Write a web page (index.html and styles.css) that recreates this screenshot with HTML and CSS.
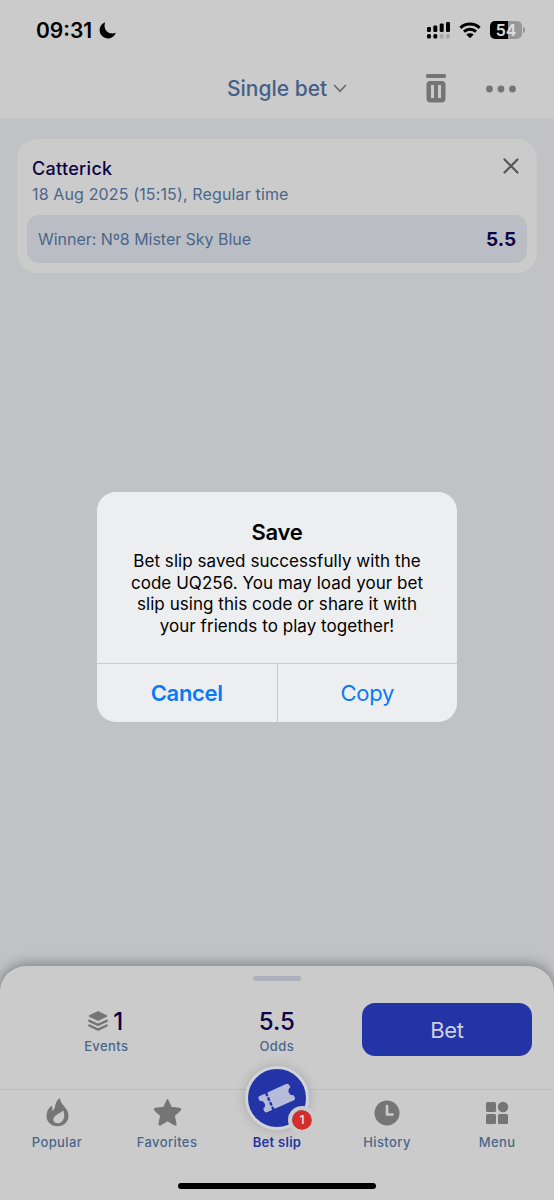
FILE: index.html
```html
<!DOCTYPE html>
<html lang="en">
<head>
  <meta charset="UTF-8">
  <meta name="viewport" content="width=device-width, initial-scale=1">
  <title>Bet slip</title>
  <link rel="stylesheet" href="styles.css">
</head>
<body>
  <header class="header">
    <div class="status">
      <span class="time">09:31</span>
      <svg class="moon" width="17" height="17" viewBox="0 0 17 17"><path d="M6.200.3A8.300 8.300 0 1 0 16.800 10.800C10 13.500 3.500 8 6.200.3z"/></svg>
      <div class="status-icons">
        <svg width="24" height="18" viewBox="0 0 24 18">
          <g fill="#000">
            <rect x="0" y="6" width="4" height="5" rx="1.200"/><rect x="6.300" y="4.500" width="4" height="6.500" rx="1.200"/>
            <rect x="12.700" y="2.500" width="4" height="8.500" rx="1.200"/><rect x="19" y="1" width="4" height="10" rx="1.200"/>
            <rect x="0" y="13" width="4" height="4.500" rx="1.500"/><rect x="6.300" y="13" width="4" height="4.500" rx="1.500"/>
          </g>
          <g fill="#a9a9a9"><rect x="12.700" y="13" width="4" height="4.500" rx="1.500"/><rect x="19" y="13" width="4" height="4.500" rx="1.500"/></g>
        </svg>
        <svg class="wifi" width="22" height="17" viewBox="0 0 22 17">
          <path d="M1.400 5.800a14 14 0 0 1 19.200 0M5 9.600a8.800 8.800 0 0 1 12 0" fill="none" stroke="#000" stroke-width="3"/>
          <path d="M7.300 12.600a5.500 5.500 0 0 1 7.400 0L11 16.300z"/>
        </svg>
        <div class="battery"><span>54</span></div>
      </div>
    </div>
    <div class="toolbar">
      <div class="bet-type">Single bet
        <svg width="14" height="9" viewBox="0 0 14 9"><path d="M1.500 1.500 7 7.200l5.500-5.700" fill="none" stroke="#6e6e6e" stroke-width="1.700" stroke-linecap="round"/></svg>
      </div>
      <svg class="trash" width="20" height="29" viewBox="0 0 20 29" fill="#757575">
        <rect x="0" y="0" width="20" height="4" rx="1.500"/>
        <path fill-rule="evenodd" d="M4 7h12a3.500 3.500 0 0 1 3.500 3.500v14A4 4 0 0 1 15.500 28.500h-11a4 4 0 0 1-4-4v-14A3.500 3.500 0 0 1 4 7zM5 11v13h3V11zM12 11v13h3V11z"/>
      </svg>
      <svg class="dots" width="30" height="8" viewBox="0 0 30 8" fill="#757575"><circle cx="3.500" cy="4" r="3.400"/><circle cx="15" cy="4" r="3.400"/><circle cx="26.500" cy="4" r="3.400"/></svg>
    </div>
  </header>

  <main class="content">
    <section class="card">
      <div class="card-head">
        <h2>Catterick</h2>
        <svg width="16" height="16" viewBox="0 0 16 16"><path d="M1.500 1.500l13 13M14.500 1.500l-13 13" stroke="#555" stroke-width="2.200" stroke-linecap="round"/></svg>
      </div>
      <p class="date">18 Aug 2025 (15:15), Regular time</p>
      <div class="pick">
        <span>Winner: Nº8 Mister Sky Blue</span>
        <strong>5.5</strong>
      </div>
    </section>
  </main>

  <div class="dialog">
    <div class="dialog-body">
      <h1>Save</h1>
      <p>Bet slip saved successfully with the<br>code UQ256. You may load your bet<br>slip using this code or share it with<br>your friends to play together!</p>
    </div>
    <div class="dialog-actions">
      <button class="cancel">Cancel</button>
      <button class="copy">Copy</button>
    </div>
  </div>

  <footer class="sheet">
    <div class="grip"></div>
    <div class="summary">
      <div class="stat">
        <div class="value">
          <svg width="20" height="21" viewBox="0 0 20 21">
            <path d="M10 .8 18.500 5 10 9.200 1.500 5z" fill="#757575" stroke="#757575" stroke-width="1.500" stroke-linejoin="round"/>
            <path d="M1.300 9.800 10 13.900l8.700-4.100M1.300 14.500 10 18.600l8.700-4.100" fill="none" stroke="#757575" stroke-width="2.400" stroke-linecap="round" stroke-linejoin="round"/>
          </svg>1
        </div>
        <div class="label">Events</div>
      </div>
      <div class="stat">
        <div class="value">5.5</div>
        <div class="label">Odds</div>
      </div>
      <button class="bet">Bet</button>
    </div>
    <nav class="tabs">
      <a class="tab">
        <div class="icon"><svg width="23" height="29" viewBox="0 0 24 30"><path fill-rule="evenodd" d="M13.500.6c.6-.5 1.200-.3 1.300.5.700 6.300 8.700 9.200 8.700 17.300 0 6.500-5 11-11.600 11C5.300 29.400.5 24.800.5 18.400c0-4.200 2-7.300 4.500-9.800.6-.6 1.300-.3 1.400.5l.6 4.700c3.300-3.500 1.700-9.100 6.500-13.200zM17.200 13.500c-2.400 2.300-9.600 4.800-9.600 8.700 0 2.500 2 4 4.500 4 4.500 0 8.600-5 6.300-12.300-.2-.6-.7-.8-1.200-.4z"/></svg></div>
        <span>Popular</span>
      </a>
      <a class="tab">
        <div class="icon"><svg width="29" height="28" viewBox="0 0 30 29"><path d="M15 2.200l3.500 7.900 8.700.9c1 .1 1.300.9.600 1.500l-6.200 5.800 1.800 8.200c.2 1-.4 1.300-1.100.8L15 23l-7.300 4.300c-.7.500-1.300.2-1.100-.8l1.800-8.200-6.200-5.800c-.7-.6-.4-1.400.6-1.500l8.700-.9z" stroke="#757575" stroke-width="2" stroke-linejoin="round"/></svg></div>
        <span>Favorites</span>
      </a>
      <a class="tab active">
        <div class="slip">
          <svg width="38" height="32" viewBox="0 0 38 32">
            <g transform="rotate(-24 19 16)">
              <path d="M4 7h5.500L11 8.500 12.500 7H33a2.500 2.500 0 0 1 2.500 2.500v2.200a4.400 4.400 0 0 0 0 8.600v2.200A2.500 2.500 0 0 1 33 25H12.500L11 23.500 9.500 25H4.500A2.500 2.500 0 0 1 2 22.500v-2.200a4.400 4.400 0 0 0 0-8.600V9a2 2 0 0 1 2-2z"/>
              <path d="M11 7.800v17" stroke="#2334a6" stroke-width="2.500" stroke-linecap="round" stroke-dasharray="1.600 3.500"/>
            </g>
          </svg>
          <span class="badge">1</span>
        </div>
        <span>Bet slip</span>
      </a>
      <a class="tab">
        <div class="icon low"><svg width="26" height="26" viewBox="0 0 26 26"><circle cx="13" cy="13" r="12.500"/><path d="M13 6v8.500h5.500" fill="none" stroke="#cbcbcb" stroke-width="2.600" stroke-linecap="round" stroke-linejoin="round"/></svg></div>
        <span>History</span>
      </a>
      <a class="tab">
        <div class="icon low"><svg width="24" height="24" viewBox="0 0 24 24"><rect x="1" y="1" width="10" height="10" rx="1.500"/><circle cx="18" cy="6" r="5.200"/><rect x="1" y="13" width="10" height="10" rx="1.500"/><rect x="13" y="13" width="10" height="10" rx="1.500"/></svg></div>
        <span>Menu</span>
      </a>
    </nav>
    <div class="home-bar"></div>
  </footer>
</body>
</html>
```

FILE: styles.css
```css
* {
  box-sizing: border-box;
}
body {
  margin: 0;
  height: 1200px;
  display: flex;
  flex-direction: column;
  overflow: hidden;
  background: #c1c2c6;
  font-family: Inter, sans-serif;
  color: #0b0345;
}
h1, h2, p {
  margin: 0;
}
svg {
  display: block;
  flex: none;
}
button {
  border: none;
  padding: 0;
  font-family: inherit;
}
.header {
  height: 119px;
  background: #cbcbcb;
  border-bottom: 1px solid #c7c7c9;
}
.status {
  display: flex;
  align-items: center;
  height: 60px;
  padding: 0 32px 0 36px;
}
.time {
  width: 58px;
  font-size: 21px;
  font-weight: 600;
  color: #000;
}
.moon {
  margin-left: 5px;
}
.status-icons {
  display: flex;
  align-items: center;
  margin-left: auto;
}
.wifi {
  margin: 0 9px 0 8px;
}
.battery {
  position: relative;
  width: 32px;
  height: 18px;
  border-radius: 5px;
  background: linear-gradient(90deg, #000 55%, #979797 55%);
  color: #ddd;
  font-size: 16px;
  font-weight: 600;
  line-height: 18px;
  text-align: center;
}
.battery::after {
  content: "";
  position: absolute;
  right: -3px;
  top: 6px;
  width: 2px;
  height: 6px;
  border-radius: 0 2px 2px 0;
  background: #979797;
}
.toolbar {
  display: flex;
  align-items: center;
  height: 57px;
  padding: 0 38px 0 227px;
}
.bet-type {
  display: flex;
  align-items: center;
  gap: 6px;
  width: 199px;
  font-size: 21px;
  font-weight: 500;
  color: #446088;
}
.dots {
  margin-left: auto;
}
.content {
  flex: 1;
  padding: 20px 17px;
}
.card {
  height: 134px;
  padding: 17px 10px 10px;
  border-radius: 20px;
  background: #cbcbcb;
}
.card-head {
  display: flex;
  justify-content: space-between;
  padding: 2px 8px 0 5px;
}
.card-head h2 {
  font-size: 18px;
  line-height: 22px;
  font-weight: 500;
  letter-spacing: 0.3px;
}
.date {
  margin-left: 5px;
  padding-top: 4px;
  height: 35px;
  font-size: 16px;
  line-height: 20px;
  letter-spacing: 0.140px;
  color: #4a668b;
}
.pick {
  display: flex;
  align-items: center;
  justify-content: space-between;
  height: 48px;
  padding: 0 11px;
  border-radius: 12px;
  background: #babec4;
  font-size: 16px;
  letter-spacing: -0.040px;
  color: #4a668b;
}
.pick strong {
  font-size: 19px;
  font-weight: 700;
  color: #0b0345;
}
.dialog {
  position: absolute;
  left: 97px;
  top: 492px;
  width: 360px;
  height: 230px;
  border-radius: 19px;
  overflow: hidden;
  background: #edeef0;
  color: #000;
  text-align: center;
}
.dialog-body {
  height: 172px;
  padding-top: 27px;
  border-bottom: 1px solid #c9cacc;
}
.dialog-body h1 {
  font-size: 22px;
  line-height: 27px;
  font-weight: 600;
  letter-spacing: -0.3px;
}
.dialog-body p {
  margin-top: 5px;
  font-size: 17px;
  line-height: 21.500px;
  letter-spacing: 0.050px;
}
.dialog-actions {
  display: flex;
  height: 58px;
}
.dialog-actions button {
  flex: 1;
  padding-bottom: 0;
  background: none;
  color: #0a7af5;
  font-size: 22px;
  letter-spacing: -0.3px;
}
.dialog-actions .cancel {
  border-right: 1px solid #c9cacc;
  font-weight: 600;
}
.sheet {
  height: 234px;
  border-radius: 26px 26px 0 0;
  background: #cbcbcb;
  box-shadow: 0 -1px 14px rgba(0, 0, 0, 0.4);
}
.grip {
  width: 48px;
  height: 5px;
  margin: 0 auto;
  border-radius: 3px;
  background: #aeb1bc;
  transform: translateY(10px);
}
.summary {
  display: flex;
  height: 118px;
  padding: 32px 22px 0 21px;
}
.stat {
  width: 170.500px;
  padding-top: 5px;
  text-align: center;
}
.value {
  display: flex;
  align-items: center;
  justify-content: center;
  gap: 5px;
  height: 27px;
  font-size: 24px;
  font-weight: 500;
}
.value svg {
  margin-left: -1px;
}
.label {
  margin-top: 3px;
  font-size: 13px;
  line-height: 16px;
  font-weight: 500;
  letter-spacing: 0.4px;
  color: #4a668b;
}
.bet {
  width: 170px;
  height: 53px;
  border-radius: 13px;
  background: #2334a6;
  color: #ccd0de;
  font-size: 22px;
  letter-spacing: -0.3px;
}
.tabs {
  display: flex;
  height: 94px;
  padding: 0 2px;
  border-top: 1px solid #bebebf;
}
.tab {
  display: flex;
  flex: 1;
  flex-direction: column;
  align-items: center;
  justify-content: space-between;
  height: 61px;
  padding-top: 7px;
  color: #4a668b;
  font-size: 13px;
  line-height: 17px;
  font-weight: 500;
  letter-spacing: 0.4px;
  fill: #757575;
}
.icon {
  display: flex;
  align-items: center;
  height: 30px;
}
.low {
  padding-top: 2px;
}
.active {
  color: #2334a6;
  font-weight: 600;
  letter-spacing: 0.3px;
}
.slip {
  position: relative;
  display: flex;
  align-items: center;
  justify-content: center;
  flex: none;
  width: 64px;
  height: 64px;
  margin-top: -31px;
  border: 3px solid #d2d4da;
  border-radius: 50%;
  background: #2334a6;
  box-shadow: 0 0 12px rgba(0, 0, 0, 0.18);
  fill: #b5bbd8;
}
.badge {
  position: absolute;
  right: -10px;
  bottom: -7px;
  width: 28px;
  height: 28px;
  border: 4px solid #cbcbcb;
  border-radius: 50%;
  background: #d52d29;
  background-clip: padding-box;
  color: #ddd;
  font-size: 12px;
  font-weight: 600;
  line-height: 20px;
  letter-spacing: 0;
  text-align: center;
}
.home-bar {
  width: 198px;
  height: 6px;
  margin: 0 auto;
  border-radius: 3px;
  background: #000;
}
```
